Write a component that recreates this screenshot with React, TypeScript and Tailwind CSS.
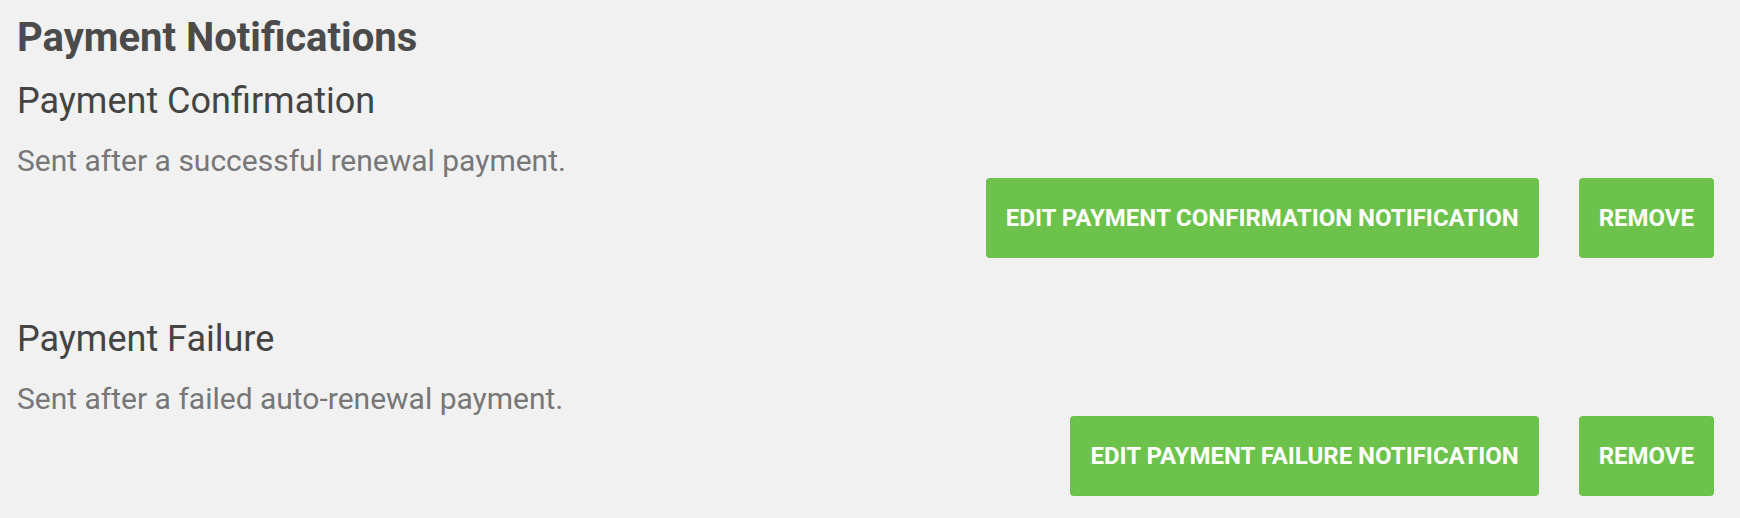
import React from 'react';

interface Notification {
  id: string;
  title: string;
  description: string;
  editLabel: string;
}

const notifications: Notification[] = [
  {
    id: 'confirmation',
    title: 'Payment Confirmation',
    description: 'Sent after a successful renewal payment.',
    editLabel: 'Edit Payment Confirmation Notification',
  },
  {
    id: 'failure',
    title: 'Payment Failure',
    description: 'Sent after a failed auto-renewal payment.',
    editLabel: 'Edit Payment Failure Notification',
  },
];

const buttonClass =
  'h-[80px] px-[20px] rounded-[4px] bg-[#6cc24a] text-white text-[24px] font-bold uppercase leading-none whitespace-nowrap';

const NotificationRow: React.FC<{ notification: Notification; first: boolean }> = ({ notification, first }) => (
  <div className={first ? 'mt-[19px]' : 'mt-[61px]'}>
    <h3 className="pl-[17px] text-[36px] leading-[40px] font-normal text-[#444444]">{notification.title}</h3>
    <p className="pl-[17px] mt-[23px] text-[30px] leading-[34px] text-[#777777]">{notification.description}</p>
    {/* Actions sit flush right under the description */}
    <div className="flex justify-end gap-[40px] pr-[26px]">
      <button className={buttonClass}>{notification.editLabel}</button>
      <button className={buttonClass}>Remove</button>
    </div>
  </div>
);

export default function App() {
  return (
    <div className="w-[1740px] h-[518px] bg-[#f1f1f1] font-['Roboto',sans-serif] overflow-hidden pt-[14px]">
      <h2 className="pl-[17px] text-[40px] leading-[48px] font-bold text-[#4b4b4b]">Payment Notifications</h2>
      {notifications.map((n, i) => (
        <NotificationRow key={n.id} notification={n} first={i === 0} />
      ))}
    </div>
  );
}
